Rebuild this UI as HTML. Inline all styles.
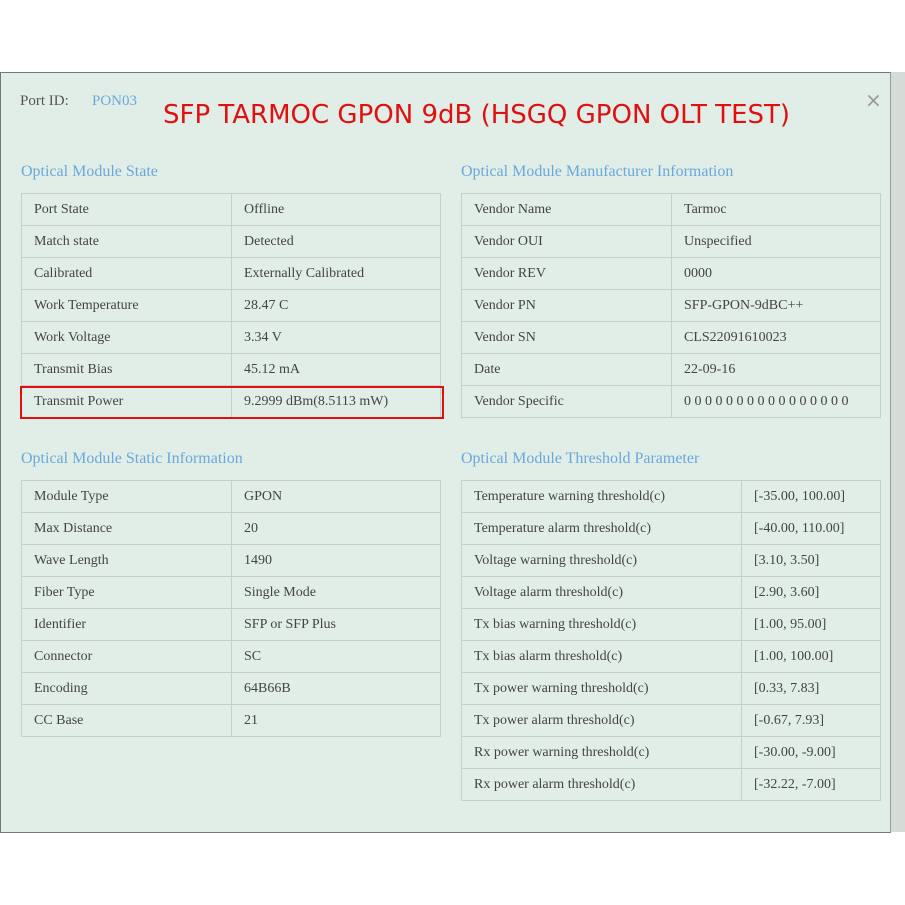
<!DOCTYPE html><html><head><style>
body{margin:0;width:905px;height:905px;background:#fff;position:relative;overflow:hidden;font-family:"Liberation Serif",serif;}
.panel{position:absolute;left:0;top:72px;width:889px;height:759px;background:#e1eee7;border:1px solid #777;border-right:1px solid #999;}
.strip{position:absolute;left:891px;top:72px;width:14px;height:760px;background:#d5dcd8;}
.t{position:absolute;border-collapse:collapse;font-size:14px;color:#444;}
.t td{border:1px solid #c6cfca;height:32px;padding:0 0 0 12px;box-sizing:border-box;}
h3{position:absolute;margin:0;font-weight:normal;font-size:16px;color:#6aa8dc;}
</style></head><body>
<div class="panel"></div><div class="strip"></div>
<div style="position:absolute;left:20px;top:93px;font-size:15px;color:#555">Port ID:</div>
<div style="position:absolute;left:92px;top:93px;font-size:15px;color:#6aa8dc">PON03</div>
<div style="position:absolute;left:163px;top:100px;font-family:'DejaVu Sans',sans-serif;font-size:26px;color:#e01010;letter-spacing:0px">SFP TARMOC GPON 9dB (HSGQ GPON OLT TEST)</div>
<div style="position:absolute;left:865px;top:88px;font-size:20px;color:#999;font-family:'DejaVu Sans',sans-serif">×</div>
<h3 style="left:21px;top:163px">Optical Module State</h3>
<h3 style="left:461px;top:163px">Optical Module Manufacturer Information</h3>
<h3 style="left:21px;top:450px">Optical Module Static Information</h3>
<h3 style="left:461px;top:450px">Optical Module Threshold Parameter</h3>
<table class="t" style="left:21px;top:193px;width:420px"><colgroup><col style="width:210px"><col></colgroup>
<tr><td>Port State</td><td>Offline</td></tr><tr><td>Match state</td><td>Detected</td></tr><tr><td>Calibrated</td><td>Externally Calibrated</td></tr><tr><td>Work Temperature</td><td>28.47 C</td></tr><tr><td>Work Voltage</td><td>3.34 V</td></tr><tr><td>Transmit Bias</td><td>45.12 mA</td></tr><tr><td>Transmit Power</td><td>9.2999 dBm(8.5113 mW)</td></tr></table>
<div style="position:absolute;left:20px;top:386px;width:420px;height:29px;border:2px solid #e01010"></div>
<table class="t" style="left:461px;top:193px;width:420px"><colgroup><col style="width:210px"><col></colgroup>
<tr><td>Vendor Name</td><td>Tarmoc</td></tr><tr><td>Vendor OUI</td><td>Unspecified</td></tr><tr><td>Vendor REV</td><td>0000</td></tr><tr><td>Vendor PN</td><td>SFP-GPON-9dBC++</td></tr><tr><td>Vendor SN</td><td>CLS22091610023</td></tr><tr><td>Date</td><td>22-09-16</td></tr><tr><td>Vendor Specific</td><td>0 0 0 0 0 0 0 0 0 0 0 0 0 0 0 0</td></tr></table>
<table class="t" style="left:21px;top:480px;width:420px"><colgroup><col style="width:210px"><col></colgroup>
<tr><td>Module Type</td><td>GPON</td></tr><tr><td>Max Distance</td><td>20</td></tr><tr><td>Wave Length</td><td>1490</td></tr><tr><td>Fiber Type</td><td>Single Mode</td></tr><tr><td>Identifier</td><td>SFP or SFP Plus</td></tr><tr><td>Connector</td><td>SC</td></tr><tr><td>Encoding</td><td>64B66B</td></tr><tr><td>CC Base</td><td>21</td></tr></table>
<table class="t" style="left:461px;top:480px;width:420px"><colgroup><col style="width:280px"><col></colgroup>
<tr><td>Temperature warning threshold(c)</td><td>[-35.00, 100.00]</td></tr><tr><td>Temperature alarm threshold(c)</td><td>[-40.00, 110.00]</td></tr><tr><td>Voltage warning threshold(c)</td><td>[3.10, 3.50]</td></tr><tr><td>Voltage alarm threshold(c)</td><td>[2.90, 3.60]</td></tr><tr><td>Tx bias warning threshold(c)</td><td>[1.00, 95.00]</td></tr><tr><td>Tx bias alarm threshold(c)</td><td>[1.00, 100.00]</td></tr><tr><td>Tx power warning threshold(c)</td><td>[0.33, 7.83]</td></tr><tr><td>Tx power alarm threshold(c)</td><td>[-0.67, 7.93]</td></tr><tr><td>Rx power warning threshold(c)</td><td>[-30.00, -9.00]</td></tr><tr><td>Rx power alarm threshold(c)</td><td>[-32.22, -7.00]</td></tr></table>
</body></html>
